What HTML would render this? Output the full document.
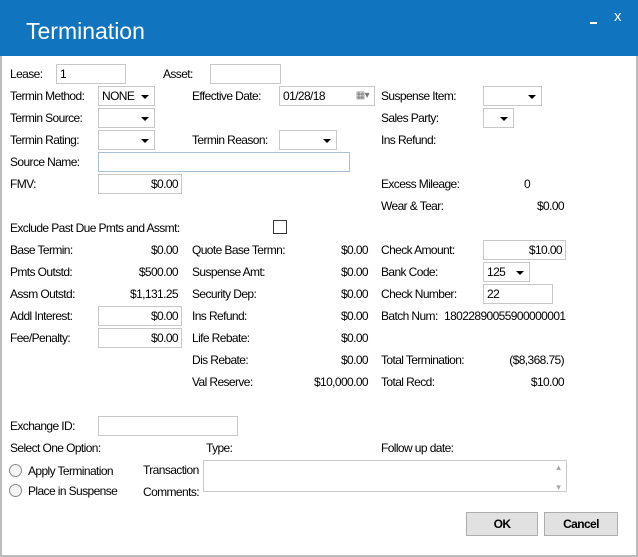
<!DOCTYPE html><html><head><style>
body{margin:0;width:638px;height:557px;overflow:hidden;background:#fff;font-family:"Liberation Sans",sans-serif;font-size:12px;color:#000;position:relative;letter-spacing:-0.6px}
.tb{position:absolute;left:0;top:0;width:638px;height:56px;background:#1174be}
.t{position:absolute;left:26px;top:18px;color:#fff;font-size:23px;letter-spacing:0}
.l{position:absolute;white-space:nowrap;line-height:14px}
.r{text-align:right}
.i{position:absolute;border:1px solid #c8c8c8;background:#fff;box-sizing:border-box;height:20px;line-height:18px;padding:0 3px;white-space:nowrap}
.dd::after{content:"";position:absolute;right:5px;top:8px;border:4px solid transparent;border-top:4px solid #000;border-bottom:0}
.rad{position:absolute;width:11px;height:11px;border:1px solid #888;border-radius:50%;background:#f4f4f4}
.btn{position:absolute;border:1px solid #adadad;background:#e1e1e1;height:22px;line-height:22px;text-align:center;font-weight:bold}
</style></head><body>
<div class="tb"><div class="t">Termination</div>
<div style="position:absolute;left:590px;top:22px;width:7px;height:2px;background:#fff"></div>
<div style="position:absolute;left:614px;top:8px;color:#fff;font-size:15px">x</div></div>
<div style="position:absolute;left:0;top:56px;width:2px;height:501px;background:#bbb"></div>
<div style="position:absolute;left:636px;top:56px;width:2px;height:501px;background:#bbb"></div>
<div style="position:absolute;left:0;top:555px;width:638px;height:2px;background:#bbb"></div>

<div class="l" style="left:10px;top:67px">Lease:</div><div class="i" style="left:56px;top:64px;width:70px">1</div>
<div class="l" style="left:163px;top:67px">Asset:</div><div class="i" style="left:210px;top:64px;width:71px"></div>

<div class="l" style="left:10px;top:89px">Termin Method:</div><div class="i dd" style="left:98px;top:86px;width:57px">NONE</div>
<div class="l" style="left:192px;top:89px">Effective Date:</div><div class="i" style="left:279px;top:86px;width:96px">01/28/18<span style="position:absolute;right:5px;top:0;color:#777;font-size:10px">▦▾</span></div>
<div class="l" style="left:381px;top:89px">Suspense Item:</div><div class="i dd" style="left:483px;top:86px;width:59px"></div>

<div class="l" style="left:10px;top:111px">Termin Source:</div><div class="i dd" style="left:98px;top:108px;width:57px"></div>
<div class="l" style="left:381px;top:111px">Sales Party:</div><div class="i dd" style="left:483px;top:108px;width:31px"></div>

<div class="l" style="left:10px;top:133px">Termin Rating:</div><div class="i dd" style="left:98px;top:130px;width:57px"></div>
<div class="l" style="left:192px;top:133px">Termin Reason:</div><div class="i dd" style="left:279px;top:130px;width:58px"></div>
<div class="l" style="left:381px;top:133px">Ins Refund:</div>

<div class="l" style="left:10px;top:155px">Source Name:</div><div class="i" style="left:98px;top:152px;width:252px;border-color:#a9bfd6"></div>
<div class="l" style="left:10px;top:177px">FMV:</div><div class="i r" style="left:98px;top:174px;width:84px">$0.00</div>
<div class="l" style="left:381px;top:177px">Excess Mileage:</div><div class="l" style="left:524px;top:177px">0</div>
<div class="l" style="left:381px;top:199px">Wear &amp; Tear:</div><div class="l r" style="left:500px;top:199px;width:64px">$0.00</div>

<div class="l" style="left:10px;top:221px">Exclude Past Due Pmts and Assmt:</div>
<div style="position:absolute;left:273px;top:220px;width:12px;height:12px;border:1px solid #333"></div>

<div class="l" style="left:10px;top:243px">Base Termin:</div><div class="l r" style="left:110px;top:243px;width:68px">$0.00</div>
<div class="l" style="left:192px;top:243px">Quote Base Termn:</div><div class="l r" style="left:300px;top:243px;width:68px">$0.00</div>
<div class="l" style="left:381px;top:243px">Check Amount:</div><div class="i r" style="left:483px;top:240px;width:83px">$10.00</div>

<div class="l" style="left:10px;top:265px">Pmts Outstd:</div><div class="l r" style="left:110px;top:265px;width:68px">$500.00</div>
<div class="l" style="left:192px;top:265px">Suspense Amt:</div><div class="l r" style="left:300px;top:265px;width:68px">$0.00</div>
<div class="l" style="left:381px;top:265px">Bank Code:</div><div class="i dd" style="left:483px;top:262px;width:47px">125</div>

<div class="l" style="left:10px;top:287px">Assm Outstd:</div><div class="l r" style="left:100px;top:287px;width:78px">$1,131.25</div>
<div class="l" style="left:192px;top:287px">Security Dep:</div><div class="l r" style="left:300px;top:287px;width:68px">$0.00</div>
<div class="l" style="left:381px;top:287px">Check Number:</div><div class="i" style="left:483px;top:284px;width:70px">22</div>

<div class="l" style="left:10px;top:309px">Addl Interest:</div><div class="i r" style="left:98px;top:306px;width:84px">$0.00</div>
<div class="l" style="left:192px;top:309px">Ins Refund:</div><div class="l r" style="left:300px;top:309px;width:68px">$0.00</div>
<div class="l" style="left:381px;top:309px">Batch Num:</div><div class="l" style="left:444px;top:309px">18022890055900000001</div>

<div class="l" style="left:10px;top:331px">Fee/Penalty:</div><div class="i r" style="left:98px;top:328px;width:84px">$0.00</div>
<div class="l" style="left:192px;top:331px">Life Rebate:</div><div class="l r" style="left:300px;top:331px;width:68px">$0.00</div>

<div class="l" style="left:192px;top:353px">Dis Rebate:</div><div class="l r" style="left:300px;top:353px;width:68px">$0.00</div>
<div class="l" style="left:381px;top:353px">Total Termination:</div><div class="l r" style="left:480px;top:353px;width:84px">($8,368.75)</div>

<div class="l" style="left:192px;top:375px">Val Reserve:</div><div class="l r" style="left:290px;top:375px;width:78px">$10,000.00</div>
<div class="l" style="left:381px;top:375px">Total Recd:</div><div class="l r" style="left:500px;top:375px;width:64px">$10.00</div>

<div class="l" style="left:10px;top:419px">Exchange ID:</div><div class="i" style="left:98px;top:416px;width:140px"></div>
<div class="l" style="left:10px;top:441px">Select One Option:</div>
<div class="l" style="left:206px;top:441px">Type:</div>
<div class="l" style="left:381px;top:441px">Follow up date:</div>

<div class="rad" style="left:9px;top:464px"></div><div class="l" style="left:28px;top:464px">Apply Termination</div>
<div class="rad" style="left:9px;top:484px"></div><div class="l" style="left:28px;top:484px">Place in Suspense</div>
<div class="l" style="left:143px;top:463px">Transaction</div>
<div class="l" style="left:143px;top:485px">Comments:</div>
<div class="i" style="left:203px;top:460px;width:364px;height:32px"><span style="position:absolute;right:4px;top:2px;color:#aaa;font-size:8px;line-height:10px">▲<br><br>▼</span></div>

<div class="btn" style="left:466px;top:512px;width:70px">OK</div>
<div class="btn" style="left:544px;top:512px;width:72px">Cancel</div>
</body></html>
